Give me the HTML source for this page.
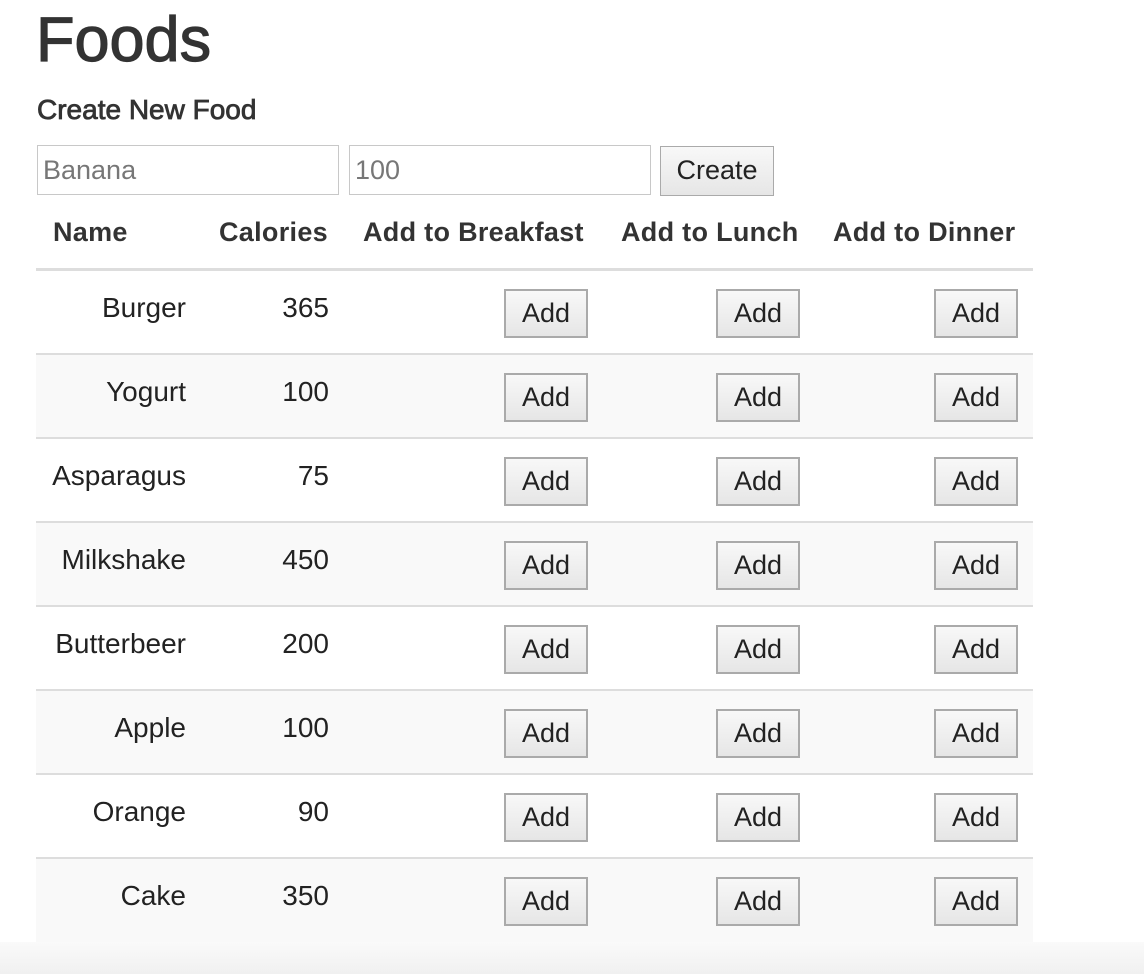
<!DOCTYPE html>
<html><head><meta charset="utf-8"><style>
*{margin:0;padding:0;box-sizing:border-box}
html,body{width:1144px;height:974px;overflow:hidden;background:#fff;font-family:"Liberation Sans",Arial,sans-serif;color:#333;position:relative}
.a{position:absolute;white-space:nowrap}
h1{position:absolute;left:36px;top:5px;font-size:63px;font-weight:normal;-webkit-text-stroke:1.2px #333;line-height:70px}
.sub{left:37px;top:94px;font-size:28px;-webkit-text-stroke:0.8px #333;line-height:32px}
.inp{position:absolute;top:145px;height:50px;border:1px solid #c8c8c8;background:#fff;font-size:27px;color:#777;padding:0 5px;line-height:48px}
.btn{position:absolute;border:2px solid #aaa;background:linear-gradient(#f8f8f8,#e6e6e6);font-size:27px;color:#222;text-align:center}
.th{top:216px;font-size:27px;font-weight:bold;line-height:32px;color:#333;letter-spacing:0.3px}
.row{position:absolute;left:36px;width:997px;height:84px}
.line{position:absolute;left:36px;width:997px;height:2px;background:#ddd}
.td{font-size:28px;line-height:32px;color:#222}
.nm{right:958px}
.cal{right:815px}
</style></head><body>
<h1>Foods</h1>
<div class="a sub">Create New Food</div>
<div class="inp" style="left:37px;width:302px">Banana</div>
<div class="inp" style="left:349px;width:302px">100</div>
<div class="btn" style="left:660px;top:146px;width:114px;height:50px;line-height:46px;border-width:1px;border-color:#aaa">Create</div>
<div class="a th" style="left:53px">Name</div>
<div class="a th" style="left:219px">Calories</div>
<div class="a th" style="left:363px">Add to Breakfast</div>
<div class="a th" style="left:621px">Add to Lunch</div>
<div class="a th" style="left:833px">Add to Dinner</div>
<div class="line" style="top:268px;height:3px"></div>
<div id="rows"></div>
<div style="position:absolute;left:0;top:942px;width:1144px;height:32px;background:linear-gradient(#fafafa,#f0f0f0)"></div>
<script>
var d=[["Burger",365],["Yogurt",100],["Asparagus",75],["Milkshake",450],["Butterbeer",200],["Apple",100],["Orange",90],["Cake",350]];
var h="";
d.forEach(function(r,i){var t=271+i*84;
if(i%2==1)h+='<div class="row" style="top:'+t+'px;background:#f9f9f9"></div>';
if(i>0)h+='<div class="line" style="top:'+(t-2)+'px"></div>';
h+='<div class="a td nm" style="top:'+(t+21)+'px">'+r[0]+'</div>';
h+='<div class="a td cal" style="top:'+(t+21)+'px">'+r[1]+'</div>';
[504,716,934].forEach(function(x){h+='<div class="btn" style="left:'+x+'px;top:'+(t+18)+'px;width:84px;height:49px;line-height:45px">Add</div>';});
});
document.getElementById("rows").innerHTML=h;
</script>
</body></html>
